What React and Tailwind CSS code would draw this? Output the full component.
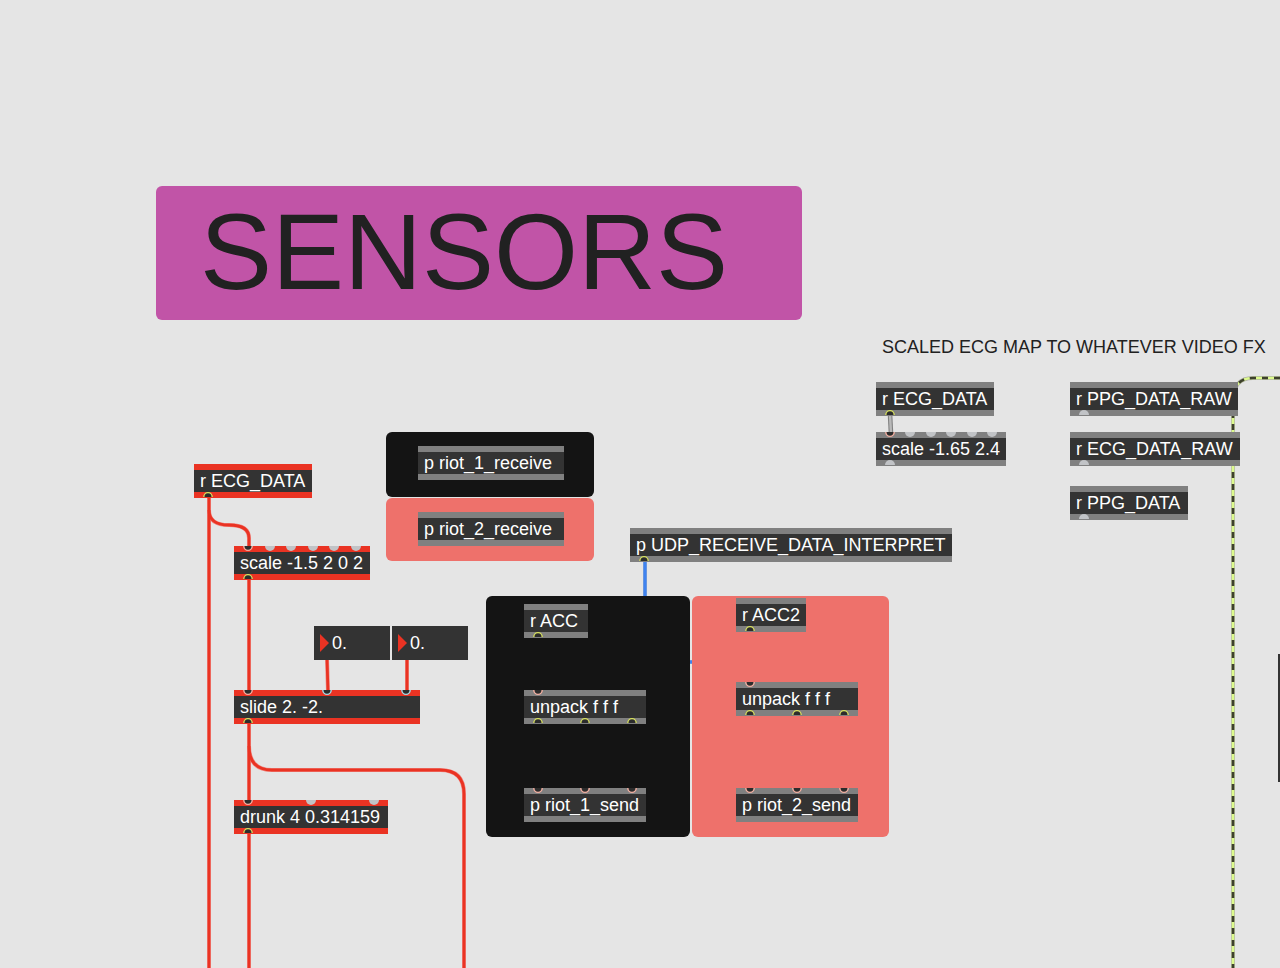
const RING = {
  yellow: "#d3dc5e",
  pink: "#f3b0a2",
  blue: "#a3dbe8",
};

function Port({ kind, side }) {
  const idle = kind === "idle";
  const inlet = side === "in";
  return (
    <svg className="block h-1.5 w-2.5 shrink-0" viewBox="0 0 10 6" aria-hidden="true">
      {idle ? (
        <path
          d={inlet ? "M0 0 A5 5 0 0 0 10 0 Z" : "M0 5 A5 5 0 0 1 10 5 Z"}
          fill="#c1c3c6"
        />
      ) : (
        <path
          d={inlet ? "M0.8 0 A4.2 4.4 0 0 0 9.2 0" : "M0.8 5 A4.2 4.4 0 0 1 9.2 5"}
          fill="#2c2c2c"
          stroke={RING[kind]}
          strokeWidth="1.4"
        />
      )}
    </svg>
  );
}

function Ports({ kinds, side, hot }) {
  return (
    <div className={`flex h-1.5 justify-between px-[9px] ${hot ? "bg-[#ea3323]" : "bg-[#808080]"}`}>
      {kinds.map((kind, i) => (
        <Port key={i} kind={kind} side={side} />
      ))}
    </div>
  );
}

function Box({ place, label, inlets = [], outlets = [], hot = false }) {
  return (
    <div className={`absolute ${place}`}>
      <Ports kinds={inlets} side="in" hot={hot} />
      <div className="h-[22px] whitespace-nowrap bg-[#333333] px-1.5 text-lg leading-[22px] text-white">
        {label}
      </div>
      <Ports kinds={outlets} side="out" hot={hot} />
    </div>
  );
}

function NumberBox({ place, name }) {
  return (
    <div className={`absolute flex h-[34px] w-[76px] items-center gap-[3px] bg-[#333333] pl-1.5 ${place}`}>
      <svg className="h-[18px] w-[9px] shrink-0" viewBox="0 0 9 18" aria-hidden="true">
        <path d="M0 0 L9 9 L0 18 Z" fill="#ea3323" />
      </svg>
      <input
        aria-label={name}
        className="w-full min-w-0 bg-transparent text-lg leading-[22px] text-white outline-none"
        defaultValue="0."
      />
    </div>
  );
}

const RED_CORDS = [
  "M209 496 V4000",
  "M209 510 C209 520 215 525 229 525 C243 525 249 530 249 538 V548",
  "M249 578 V692",
  "M249 722 V802",
  "M249 746 C249 762 257 770 272 770 H440 C456 770 464 778 464 794 V4000",
  "M249 832 V4000",
  "M327 658 L328 692",
  "M407 658 V692",
];

function Cords() {
  return (
    <svg className="absolute inset-0 h-full w-full" fill="none" aria-hidden="true">
      {RED_CORDS.map((d) => (
        <path key={d} d={d} stroke="#ef8a84" strokeWidth="4" />
      ))}
      {RED_CORDS.map((d) => (
        <path key={d} d={d} stroke="#ea3323" strokeWidth="2.8" />
      ))}
      <path d="M645 560 V662 H720" stroke="#8ea6cf" strokeWidth="4" />
      <path d="M645 560 V662 H720" stroke="#3f83f0" strokeWidth="3" />
      <path d="M890 414 L891 434" stroke="#808080" strokeWidth="4.6" />
      <path d="M890 414 L891 434" stroke="#b9b9b9" strokeWidth="2.4" />
      <path d="M4000 378 H1253 C1240 378 1233 386 1233 400 V4000" stroke="#b0b2a6" strokeWidth="4" />
      <path d="M4000 378 H1253 C1240 378 1233 386 1233 400 V4000" stroke="#dcfa8c" strokeWidth="2.6" />
      <path d="M1280 378 H1253 C1240 378 1233 386 1233 400" stroke="#3d3f2c" strokeWidth="2.6" strokeDasharray="6 6" />
      <path d="M1233 400 V4000" stroke="#3d3f2c" strokeWidth="2.6" strokeDasharray="6 6" />
    </svg>
  );
}

function Panel({ place }) {
  return <div className={`absolute rounded-md ${place}`} />;
}

export default function App() {
  return (
    <main className="relative min-h-screen w-full overflow-hidden bg-[#e5e5e5] font-['Liberation_Sans',Arial,sans-serif]">
      <Cords />

      <Panel place="left-[386px] top-[432px] h-[65px] w-[208px] bg-[#141414]" />
      <Panel place="left-[386px] top-[498px] h-[63px] w-[208px] bg-[#ee716b]" />
      <Panel place="left-[486px] top-[596px] h-[241px] w-[204px] bg-[#141414]" />
      <Panel place="left-[692px] top-[596px] h-[241px] w-[197px] bg-[#ee716b]" />

      <h1 className="absolute left-[156px] top-[186px] h-[134px] w-[646px] rounded-md bg-[#c154a7] pl-11 text-[108px] leading-[132px] text-[#212121]">
        SENSORS
      </h1>
      <p className="absolute left-[882px] top-[336px] whitespace-nowrap text-lg leading-[22px] text-[#212121]">
        SCALED ECG MAP TO WHATEVER VIDEO FX
      </p>

      <Box hot place="left-[194px] top-[464px] w-[118px]" label="r ECG_DATA" outlets={["yellow"]} />
      <Box
        hot
        place="left-[234px] top-[546px] w-[136px]"
        label="scale -1.5 2 0 2"
        inlets={["pink", "idle", "idle", "idle", "idle", "idle"]}
        outlets={["yellow"]}
      />
      <NumberBox place="left-[314px] top-[626px]" name="Slide up" />
      <NumberBox place="left-[392px] top-[626px]" name="Slide down" />
      <Box
        hot
        place="left-[234px] top-[690px] w-[186px]"
        label="slide 2. -2."
        inlets={["pink", "blue", "blue"]}
        outlets={["yellow"]}
      />
      <Box
        hot
        place="left-[234px] top-[800px] w-[154px]"
        label="drunk 4 0.314159"
        inlets={["pink", "idle", "idle"]}
        outlets={["yellow"]}
      />

      <Box place="left-[418px] top-[446px] w-[146px]" label="p riot_1_receive" />
      <Box place="left-[418px] top-[512px] w-[146px]" label="p riot_2_receive" />
      <Box place="left-[630px] top-[528px] w-[322px]" label="p UDP_RECEIVE_DATA_INTERPRET" outlets={["yellow"]} />

      <Box place="left-[524px] top-[604px] w-[64px]" label="r ACC" outlets={["yellow"]} />
      <Box
        place="left-[524px] top-[690px] w-[122px]"
        label="unpack f f f"
        inlets={["pink"]}
        outlets={["yellow", "yellow", "yellow"]}
      />
      <Box place="left-[524px] top-[788px] w-[122px]" label="p riot_1_send" inlets={["pink", "pink", "pink"]} />

      <Box place="left-[736px] top-[598px] w-[70px]" label="r ACC2" outlets={["yellow"]} />
      <Box
        place="left-[736px] top-[682px] w-[122px]"
        label="unpack f f f"
        inlets={["pink"]}
        outlets={["yellow", "yellow", "yellow"]}
      />
      <Box place="left-[736px] top-[788px] w-[122px]" label="p riot_2_send" inlets={["pink", "pink", "pink"]} />

      <Box place="left-[876px] top-[382px] w-[118px]" label="r ECG_DATA" outlets={["yellow"]} />
      <Box
        place="left-[876px] top-[432px] w-[130px]"
        label="scale -1.65 2.4"
        inlets={["pink", "idle", "idle", "idle", "idle", "idle"]}
        outlets={["idle"]}
      />
      <Box place="left-[1070px] top-[382px] w-[168px]" label="r PPG_DATA_RAW" outlets={["idle"]} />
      <Box place="left-[1070px] top-[432px] w-[170px]" label="r ECG_DATA_RAW" outlets={["idle"]} />
      <Box place="left-[1070px] top-[486px] w-[118px]" label="r PPG_DATA" outlets={["idle"]} />

      <div className="absolute left-[1278px] top-[654px] h-32 w-32 bg-[#333333]" />
    </main>
  );
}
